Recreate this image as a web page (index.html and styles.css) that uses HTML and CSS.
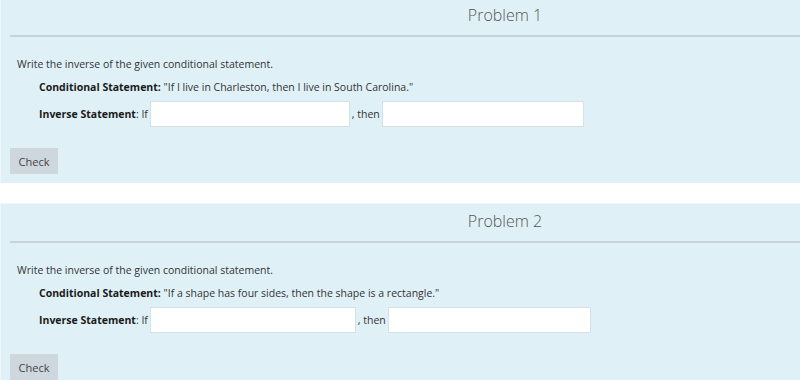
FILE: index.html
```html
<!DOCTYPE html>
<html>
<head>
<meta charset="utf-8">
<link rel="stylesheet" href="styles.css">
</head>
<body>
<div class="page">
  <section class="panel">
    <div class="panel-head"><h2 class="title">Problem 1</h2></div>
    <div class="panel-body">
      <p class="prompt">Write the inverse of the given conditional statement.</p>
      <p class="cond"><b>Conditional Statement:</b> "If I live in Charleston, then I live in South Carolina."</p>
      <div class="inv"><b>Inverse Statement</b><span>: If</span><input class="box b1" type="text"><span>, then</span><input class="box b2" type="text"></div>
      <button class="check">Check</button>
    </div>
  </section>
  <section class="panel">
    <div class="panel-head"><h2 class="title">Problem 2</h2></div>
    <div class="panel-body">
      <p class="prompt">Write the inverse of the given conditional statement.</p>
      <p class="cond"><b>Conditional Statement:</b> "If a shape has four sides, then the shape is a rectangle."</p>
      <div class="inv"><b>Inverse Statement</b><span>: If</span><input class="box b3" type="text"><span>, then</span><input class="box b4" type="text"></div>
      <button class="check">Check</button>
    </div>
  </section>
</div>
</body>
</html>
```
FILE: styles.css
```css
html, body { margin: 0; padding: 0; background: #ffffff; }
body { font-family: "Open Sans", "Noto Sans", sans-serif; font-size: 10.5px; color: #333; }
.page { margin-top: -3px; display: flex; flex-direction: column; gap: 20px; }
.panel {
  background: #dff1f7;
  border-left: 1px solid #eef8fb;
  border-top: 1px solid #eef8fb;
  height: 186px;
  box-sizing: border-box;
}
.panel-head {
  height: 39px;
  margin-left: 9px;
  border-bottom: 2px solid #c6d4da;
  display: flex;
  align-items: center;
  justify-content: center;
  box-sizing: border-box;
}
.title {
  margin: 0;
  font-family: "Open Sans", sans-serif;
  font-weight: 300;
  font-size: 16px;
  color: #555;
  transform: translate(100px, -2px);
}
.panel-body { padding: 19px 0 0 16px; }
.prompt { margin: 0 0 7px 0; line-height: 16px; }
.cond { margin: 0 0 6px 22px; line-height: 16px; }
.cond b, .inv b { color: #1a1a1a; }
.inv { margin-left: 22px; display: flex; align-items: center; height: 26px; white-space: pre; }
.box {
  height: 26px;
  box-sizing: border-box;
  border: 1px solid #d5e1e6;
  background: #fff;
  margin: 0 2px;
  padding: 0;
}
.b1 { width: 200px; margin-left: 2px; }
.b2 { width: 202px; }
.b3 { width: 206px; margin-left: 2px; }
.b4 { width: 203px; }
.check {
  margin-top: 21px;
  margin-left: -7px;
  width: 48px;
  height: 26px;
  border: 0;
  background: #ced6de;
  color: #444;
  font-family: "Open Sans", sans-serif;
  font-size: 11px;
  padding: 0;
}
```
